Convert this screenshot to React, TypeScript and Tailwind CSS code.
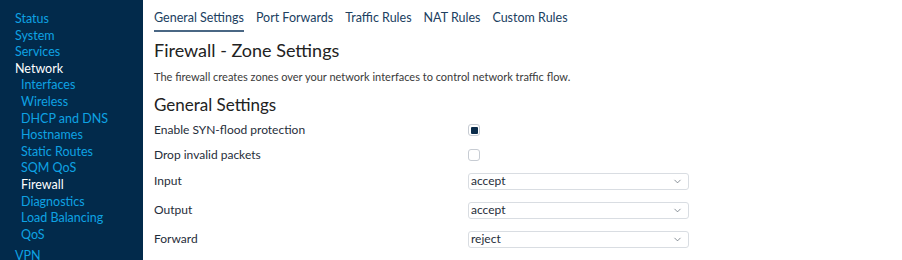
import { ChevronDown } from 'lucide-react'

const menu: Array<{ label: string; sub?: boolean; active?: boolean }> = [
  { label: 'Status' },
  { label: 'System' },
  { label: 'Services' },
  { label: 'Network', active: true },
  { label: 'Interfaces', sub: true },
  { label: 'Wireless', sub: true },
  { label: 'DHCP and DNS', sub: true },
  { label: 'Hostnames', sub: true },
  { label: 'Static Routes', sub: true },
  { label: 'SQM QoS', sub: true },
  { label: 'Firewall', sub: true, active: true },
  { label: 'Diagnostics', sub: true },
  { label: 'Load Balancing', sub: true },
  { label: 'QoS', sub: true },
]

const tabs = ['General Settings', 'Port Forwards', 'Traffic Rules', 'NAT Rules', 'Custom Rules']

function Select({ value }: { value: string }) {
  return (
    <div className="w-[221px] h-[17px] flex items-center justify-between border border-[#d9dde2] rounded-[3px] pl-[2px] pr-[5px] text-[12px] text-[#1f2d3a] bg-white">
      <span>{value}</span>
      <ChevronDown className="w-[11px] h-[11px] text-[#55606b]" strokeWidth={1.5} />
    </div>
  )
}

function Checkbox({ checked }: { checked?: boolean }) {
  return (
    <div className="w-[12px] h-[12px] rounded-[3px] border border-[#c7ccd3] flex items-center justify-center bg-white">
      {checked && <div className="w-[7px] h-[7px] rounded-[1px] bg-[#0b2c4b]" />}
    </div>
  )
}

export default function App() {
  const rows: Array<{ label: string; control: JSX.Element; h: string }> = [
    { label: 'Enable SYN-flood protection', control: <Checkbox checked />, h: 'h-[27px]' },
    { label: 'Drop invalid packets', control: <Checkbox />, h: 'h-[23px]' },
    { label: 'Input', control: <Select value="accept" />, h: 'h-[29px]' },
    { label: 'Output', control: <Select value="accept" />, h: 'h-[29px]' },
    { label: 'Forward', control: <Select value="reject" />, h: 'h-[29px]' },
  ]

  return (
    <div className="flex w-[902px] h-[260px] overflow-hidden bg-white" style={{ fontFamily: 'Lato, "Liberation Sans", sans-serif' }}>
      {/* Sidebar */}
      <div className="w-[143px] shrink-0 bg-[#022a4b] pt-[11px]">
        {menu.map((m) => (
          <div
            key={m.label}
            className={`h-[16.6px] leading-[16.6px] text-[12.5px] ${m.sub ? 'pl-[21px]' : 'pl-[15px]'} ${
              m.active ? 'text-white' : 'text-[#0ea2e3]'
            }`}
          >
            {m.label}
          </div>
        ))}
        <div className="mt-[5px] pl-[15px] text-[12.5px] leading-[16px] text-[#0ea2e3]">VPN</div>
      </div>

      {/* Main */}
      <div className="flex-1 pl-[11px] text-[#1f2d3a]">
        <div className="flex gap-[12px] pt-[9px] text-[12.5px] text-[#20405f]">
          {tabs.map((t, i) => (
            <div key={t} className={`pb-[2px] ${i === 0 ? 'border-b-2 border-[#4a6784]' : 'border-b-2 border-transparent'}`}>
              {t}
            </div>
          ))}
        </div>

        <h1 className="mt-[6px] text-[18px] leading-[24px] text-[#222]">Firewall - Zone Settings</h1>
        <p className="mt-[8px] text-[11px] leading-[14px] text-[#3a3a3a]">
          The firewall creates zones over your network interfaces to control network traffic flow.
        </p>
        <h2 className="mt-[10px] text-[17px] leading-[22px] text-[#222]">General Settings</h2>

        <div className="mt-[1px] text-[12px]">
          {rows.map((r) => (
            <div key={r.label} className={`flex items-center ${r.h}`}>
              <div className="w-[314px]">{r.label}</div>
              {r.control}
            </div>
          ))}
        </div>
      </div>
    </div>
  )
}
